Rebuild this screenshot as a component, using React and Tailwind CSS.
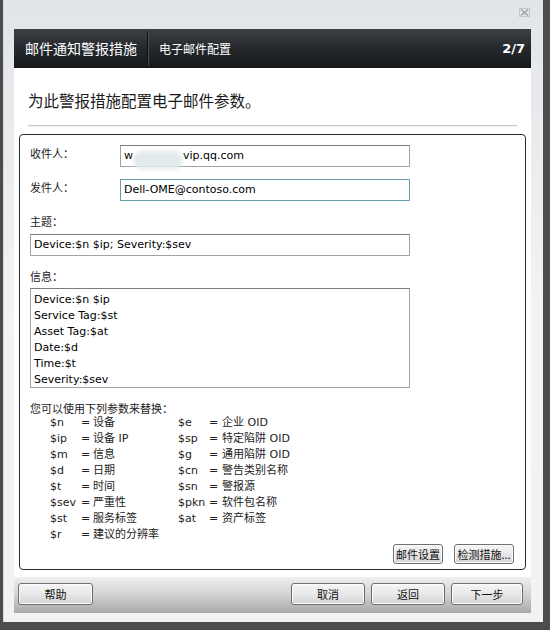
import React from "react";

const font = "font-['DejaVu_Sans','Noto_Sans_CJK_SC',sans-serif]";
const cjk = "font-['Noto_Sans_CJK_SC',sans-serif]";

function WinButton({ children, className = "" }) {
  return (
    <div
      className={`flex items-center justify-center border border-[#707070] rounded-[3px] bg-gradient-to-b from-[#f6f6f6] via-[#e8e8e8] to-[#d4d4d4] text-[11px] leading-none text-[#111] shadow-[inset_0_0_0_1px_#fbfbfb] ${cjk} ${className}`}
    >
      {children}
    </div>
  );
}

const params = [
  ["$n", "设备", "$e", "企业 OID"],
  ["$ip", "设备 IP", "$sp", "特定陷阱 OID"],
  ["$m", "信息", "$g", "通用陷阱 OID"],
  ["$d", "日期", "$cn", "警告类别名称"],
  ["$t", "时间", "$sn", "警报源"],
  ["$sev", "严重性", "$pkn", "软件包名称"],
  ["$st", "服务标签", "$at", "资产标签"],
  ["$r", "建议的分辨率", "", ""],
];

const messageLines = [
  "Device:$n $ip",
  "Service Tag:$st",
  "Asset Tag:$at",
  "Date:$d",
  "Time:$t",
  "Severity:$sev",
];

export default function App() {
  return (
    <div className={`w-[550px] h-[630px] bg-[#4c4c4c] overflow-hidden ${font}`}>
      <div className="ml-[3px] w-[540px] h-[622px] flex flex-col pl-[10px] pr-[12px] bg-gradient-to-b from-[#e2e5e8] via-[#f2f3f4] to-[#f2f2f2] border-l border-[#d8d8d8]">
        {/* top strip with close */}
        <div className="h-[29px] flex justify-end items-start pt-[8px] pr-[1px]">
          <svg width="11" height="9" viewBox="0 0 11 9">
            <rect x="0.5" y="0.5" width="10" height="8" fill="none" stroke="#c4c8cc" />
            <path d="M2 1.5 L9 7.5 M9 1.5 L2 7.5" stroke="#9ca1a6" strokeWidth="1.4" />
          </svg>
        </div>

        {/* header bar */}
        <div className="h-[39px] flex items-stretch bg-gradient-to-b from-[#3d4146] via-[#25292d] to-[#15181b] text-white">
          <div className={`flex items-center pl-[11px] pr-[10px] text-[14px] ${cjk}`}>邮件通知警报措施</div>
          <div className="w-[2px] border-l border-[#0c0d0e] bg-[#4a4e53] my-[2px]" />
          <div className={`flex items-center pl-[10px] text-[12px] ${cjk}`}>电子邮件配置</div>
          <div className="flex-1" />
          <div className="flex items-center pr-[6px] text-[13px] font-bold">2/7</div>
        </div>

        {/* main */}
        <div className="flex-1 bg-white flex flex-col">
          <div className={`pl-[14px] pt-[22px] h-[42px] text-[15.5px] leading-[20px] text-[#1a1a1a] ${cjk}`}>
            为此警报措施配置电子邮件参数。
          </div>
          <div className="mx-[14px] mt-[15px] h-[2px] border-t border-[#c8c8c8] bg-[#efefef]" />
          <div className="mx-[5px] mt-[7px] h-[436px] border border-[#2a2a2a] rounded-[4px] px-[10px] pt-[10px] flex flex-col text-[11px] text-[#222]">
            <div className="flex items-center h-[22px]">
              <div className={`w-[90px] pb-[6px] leading-[16px] ${cjk}`}>收件人：</div>
              <div className="w-[290px] h-[22px] border border-[#a4a4a4] border-t-[#7c7c7c] flex items-center pl-[3px] text-black whitespace-nowrap">
                <span>w</span>
                <span className="inline-block w-[50px] h-[18px] mt-[8px] rounded-full bg-[#e2eaed] blur-[2px]" />
                <span>vip.qq.com</span>
              </div>
            </div>
            <div className="flex items-center h-[22px] mt-[12px]">
              <div className={`w-[90px] pb-[6px] leading-[16px] ${cjk}`}>发件人：</div>
              <div className="w-[290px] h-[22px] border border-[#6b9ead] flex items-center pl-[3px] text-black">
                Dell-OME@contoso.com
              </div>
            </div>
            <div className={`mt-[12px] h-[16px] leading-[16px] ${cjk}`}>主题：</div>
            <div className="mt-[5px] w-[380px] h-[22px] border border-[#a4a4a4] border-t-[#7c7c7c] flex items-center pl-[3px] text-black whitespace-nowrap">
              Device:$n $ip; Severity:$sev
            </div>
            <div className={`mt-[12px] h-[16px] leading-[16px] ${cjk}`}>信息：</div>
            <div className="mt-[4px] w-[380px] h-[100px] border border-[#a4a4a4] border-t-[#7c7c7c] pl-[3px] pt-[3px] overflow-hidden text-black leading-[16px]">
              {messageLines.map((l) => (
                <div key={l} className="whitespace-nowrap">{l}</div>
              ))}
            </div>
            <div className={`mt-[14px] h-[13px] leading-[13px] ${cjk}`}>您可以使用下列参数来替换：</div>
            <div className="pl-[20px] grid grid-cols-[31px_12px_85px_31px_13px_auto] leading-[16px] whitespace-nowrap">
              {params.map(([a, av, b, bv], i) => (
                <React.Fragment key={i}>
                  <div>{a}</div>
                  <div>=</div>
                  <div>{av}</div>
                  <div>{b}</div>
                  <div>{b ? "=" : ""}</div>
                  <div>{bv}</div>
                </React.Fragment>
              ))}
            </div>
            <div className="mt-[1px] flex justify-end gap-[11px] pr-[1px]">
              <WinButton className="w-[50px] h-[20px]">邮件设置</WinButton>
              <WinButton className="w-[60px] h-[20px]">检测措施...</WinButton>
            </div>
          </div>
        </div>

        {/* footer */}
        <div className="h-[36px] bg-gradient-to-b from-[#f0f0f0] via-[#d2d2d2] to-[#a9a9a9] flex items-start pt-[6px] pl-[4px] pr-[8px]">
          <WinButton className="w-[75px] h-[22px]">帮助</WinButton>
          <div className="flex-1" />
          <div className="flex gap-[6px]">
            <WinButton className="w-[74px] h-[22px]">取消</WinButton>
            <WinButton className="w-[74px] h-[22px]">返回</WinButton>
            <WinButton className="w-[72px] h-[22px]">下一步</WinButton>
          </div>
        </div>
        <div className="h-[9px]" />
      </div>
    </div>
  );
}
